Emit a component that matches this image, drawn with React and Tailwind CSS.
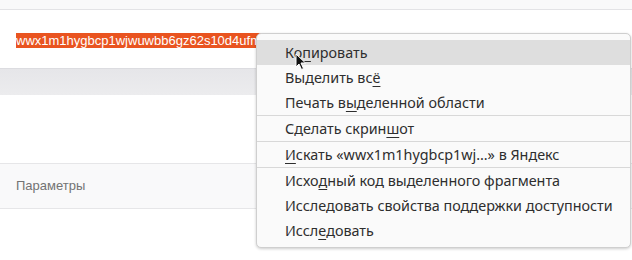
import React from "react";

const U = ({ children }) => (
  <span className="underline decoration-1 underline-offset-[3px]">{children}</span>
);

function Row({ children, active }) {
  return (
    <div
      className={
        "h-[25px] flex items-center pl-[28px] text-[14.35px] text-[#2e2e2e] whitespace-nowrap " +
        (active ? "bg-[#dedede]" : "")
      }
    >
      {children}
    </div>
  );
}

const Sep = () => <div className="h-px bg-[#d8d8d8]" />;

export default function App() {
  return (
    <div
      className="relative w-[632px] h-[260px] overflow-hidden bg-white"
      style={{ fontFamily: '"Liberation Sans", Arial, sans-serif' }}
    >
      <div className="h-[10px] bg-[#f9f9fa] border-b border-[#e3e3e6]" />
      <div className="h-[58px] pt-[21px] pl-[16px]">
        <span className="inline-block w-[461px] h-[15px] overflow-hidden whitespace-nowrap bg-[#e95420] text-white text-[13px] leading-[15px]">
          wwx1m1hygbcp1wjwuwbb6gz62s10d4ufmq7k3zr9t5vx0pl2e8nd4h6jw
        </span>
      </div>
      <div className="h-[27px] border-t border-[#dcdce0] bg-gradient-to-b from-[#e6e6e9] to-[#ececee]" />
      <div className="h-[68px]" />
      <div className="h-[46px] border-y border-[#e6e6e8] bg-[#f9f9fa] flex items-center pl-[16px]">
        <span className="text-[13px] text-[#737373]">Параметры</span>
      </div>

      <div
        className="absolute left-[256px] top-[33px] w-[375px] h-[215px] rounded-[5px] border border-[#cfcfcf] bg-[#fafafa] shadow-[0_1px_3px_rgba(0,0,0,0.2)] pt-[6px] overflow-hidden"
        style={{ fontFamily: '"Noto Sans", "DejaVu Sans", sans-serif' }}
      >
        <Row active>
          Ко<U>п</U>ировать
        </Row>
        <Row>
          Выделить вс<U>ё</U>
        </Row>
        <Row>
          Печать в<U>ы</U>деленной области
        </Row>
        <Sep />
        <Row>
          Сделать скрин<U>ш</U>от
        </Row>
        <Sep />
        <Row>
          <U>И</U>скать «wwx1m1hygbcp1wj…» в Яндекс
        </Row>
        <Sep />
        <Row>
          Исхо<U>д</U>ный код выделенного фрагмента
        </Row>
        <Row>Исследовать свойства поддержки доступности</Row>
        <Row>
          Иссл<U>е</U>довать
        </Row>
      </div>

      <svg
        className="absolute left-[295px] top-[53px]"
        width="12"
        height="18"
        viewBox="0 0 12 18"
      >
        <path
          d="M1 1 L1 14 L4 11 L6.5 16.5 L8.5 15.5 L6 10 L10.5 10 Z"
          fill="#111"
          stroke="#fff"
          strokeWidth="1"
          strokeLinejoin="round"
        />
      </svg>
    </div>
  );
}
